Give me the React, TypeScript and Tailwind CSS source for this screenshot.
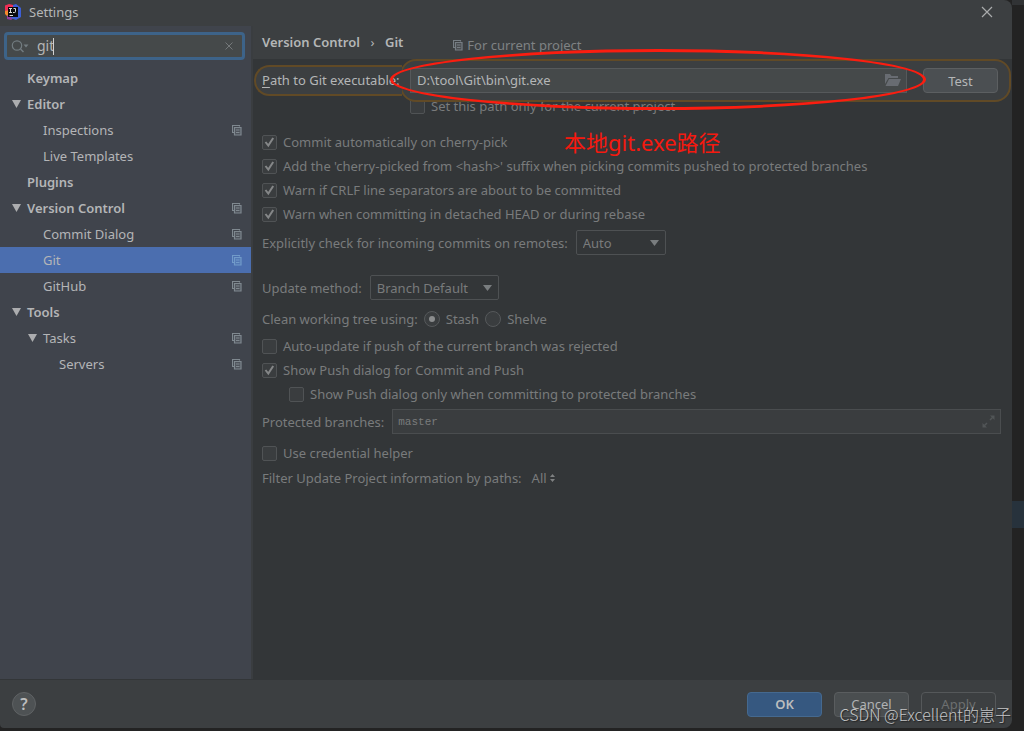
import React from 'react';

type TreeItem = {
  label: string;
  level: 0 | 1 | 2;
  expanded?: boolean;
  perProject?: boolean;
  selected?: boolean;
};

const TREE: TreeItem[] = [
  { label: 'Keymap', level: 0 },
  { label: 'Editor', level: 0, expanded: true },
  { label: 'Inspections', level: 1, perProject: true },
  { label: 'Live Templates', level: 1 },
  { label: 'Plugins', level: 0 },
  { label: 'Version Control', level: 0, expanded: true, perProject: true },
  { label: 'Commit Dialog', level: 1, perProject: true },
  { label: 'Git', level: 1, perProject: true, selected: true },
  { label: 'GitHub', level: 1, perProject: true },
  { label: 'Tools', level: 0, expanded: true },
  { label: 'Tasks', level: 1, expanded: true, perProject: true },
  { label: 'Servers', level: 2, perProject: true },
];

const INDENT = { 0: 'pl-3 font-semibold', 1: 'pl-7', 2: 'pl-11' };

export default function App() {
  return (
    <div className="flex min-h-screen bg-[#232323] font-['Noto_Sans','Noto_Sans_CJK_SC',sans-serif] text-[13px] leading-5">
      <div className="relative mb-[3px] flex min-w-0 flex-1 flex-col overflow-hidden rounded-r-lg rounded-bl-sm bg-[#3c3f41]">
        <TitleBar />
        <div className="flex flex-1">
          <Sidebar />
          <GitSettings />
        </div>
        <Footer />
        <p className="pointer-events-none absolute right-px bottom-[2px] text-base leading-6 font-light whitespace-nowrap text-[#c4c5c6] [font-family:'Noto_Sans_CJK_SC',sans-serif] [text-shadow:1px_1px_1px_#222]">
          CSDN @Excellent的崽子
        </p>
      </div>
      <EditorEdge />
    </div>
  );
}

function TitleBar() {
  return (
    <header className="flex h-[26px] items-center pr-[19px] pb-[3px] pl-[5px] text-[#b4b6b7]">
      <AppLogo />
      <h1 className="ml-2 flex-1">Settings</h1>
      <button type="button" aria-label="Close">
        <svg className="h-3 w-3" viewBox="0 0 12 12" stroke="#a9abac" strokeWidth="1.2" aria-hidden="true">
          <path d="M1 1l10 10M11 1L1 11" />
        </svg>
      </button>
    </header>
  );
}

function Sidebar() {
  return (
    <aside className="w-[251px] shrink-0 bg-[#40444c] pt-[6px] text-[#b4b5b7]">
      <div className="mr-[6px] ml-1 flex h-7 items-center rounded border-[3px] border-[#3d6389] bg-[#45494a] pr-[9px] pl-1">
        <svg className="h-4 w-[18px] shrink-0" viewBox="0 0 18 16" fill="none" aria-hidden="true">
          <circle cx="6" cy="7.5" r="4.7" stroke="#727c80" strokeWidth="1.2" />
          <path d="M9.5 11l3 3" stroke="#727c80" strokeWidth="1.5" />
          <path d="M12.5 6.5h5L15 9.5z" fill="#727c80" />
        </svg>
        <input
          type="text"
          aria-label="Search settings"
          defaultValue="git"
          className="ml-2 w-[16px] bg-transparent text-sm leading-5 text-[#b4b5b6] outline-none"
        />
        <span className="h-[17px] w-px bg-[#d0d0d0]" />
        <button type="button" aria-label="Clear search" className="ml-auto">
          <svg className="h-2 w-2" viewBox="0 0 8 8" stroke="#75797b" aria-hidden="true">
            <path d="M0.5 0.5l7 7M7.5 0.5l-7 7" />
          </svg>
        </button>
      </div>
      <ul className="mt-[5px]">
        {TREE.map(item => (
          <li
            key={item.label}
            className={`flex h-[26px] items-center pr-[9px] ${INDENT[item.level]} ${item.selected ? 'bg-[#4b6eaf]' : ''}`}
          >
            <span className="w-[15px] shrink-0">
              {item.expanded ? (
                <svg className="h-2 w-[9px]" viewBox="0 0 9 8" fill="#acadaf" aria-hidden="true">
                  <path d="M0 0h9L4.5 8z" />
                </svg>
              ) : null}
            </span>
            <span className="flex-1">{item.label}</span>
            {item.perProject ? <ProjectIcon color={item.selected ? '#719ac9' : '#7f888f'} /> : null}
          </li>
        ))}
      </ul>
    </aside>
  );
}

function GitSettings() {
  return (
    <main className="min-w-0 flex-1 border-l-2 border-[#3a3d40] bg-[#333638] text-[#797b7c]">
      <div className="flex h-[33px] items-center bg-[#3c3f41] pb-px pl-[9px]">
        <nav className="flex items-center font-semibold text-[#b4b6b7]" aria-label="Breadcrumb">
          <a href="#version-control">Version Control</a>
          <span className="w-[25px] text-center font-normal">›</span>
          <span>Git</span>
        </nav>
        <p className="mt-[6px] ml-[50px] flex items-center gap-1 text-[#7f8284]">
          <ProjectIcon color="#767d83" />
          For current project
        </p>
      </div>

      <div className="relative flex items-center pl-px">
        <label
          htmlFor="git-path"
          className="z-10 flex h-[31px] w-[148px] shrink-0 items-center rounded-l-full border-2 border-r-0 border-[#614a26] bg-[#3c3f41] pb-[2px] pl-[6px] whitespace-nowrap text-[#b4b6b7]"
        >
          <span className="underline underline-offset-2">P</span>ath to Git executable:
        </label>
        <div className="relative mr-px -ml-[2px] flex h-[43px] flex-1 items-center gap-4 rounded-2xl border-2 border-[#614a26] bg-[#3c3f41] pr-[11px] pl-2">
          <div className="flex h-[25px] flex-1 items-center border border-[#56595b] bg-[#45494a] pr-[5px] pb-[2px] pl-[6px]">
            <input
              id="git-path"
              type="text"
              defaultValue="D:\tool\Git\bin\git.exe"
              className="min-w-0 flex-1 bg-transparent text-[#b4b6b7] outline-none"
            />
            <button type="button" aria-label="Browse">
              <svg className="h-3 w-4" viewBox="0 0 16 12" fill="#686c72" aria-hidden="true">
                <path d="M0 10V0h5l1.5 2H13v2H3.5z" />
                <path d="M4 5h12l-3 7H0.5z" />
              </svg>
            </button>
          </div>
          <button
            type="button"
            className="h-[25px] w-[75px] rounded border border-[#5c5f61] bg-[#4b4f52] text-[#b4b6b7]"
          >
            Test
          </button>
        </div>
        <div className="pointer-events-none absolute -top-[10px] right-[86px] -bottom-[8px] left-[137px] z-20 rounded-[50%] border-[3px] border-[#fb1d10]" />
        <p className="pointer-events-none absolute top-[67px] left-[311px] text-[22px] leading-8 whitespace-nowrap text-[#f5190f]">
          本地git.exe路径
        </p>
      </div>

      <div className="pr-[11px] pl-[9px]">
        <div className="-mt-1 h-4 pl-[148px]">
          <Check label="Set this path only for the current project" />
        </div>

        <div className="mt-4">
          <Check label="Commit automatically on cherry-pick" checked />
          <Check
            label="Add the 'cherry-picked from <hash>' suffix when picking commits pushed to protected branches"
            checked
          />
          <Check label="Warn if CRLF line separators are about to be committed" checked />
          <Check label="Warn when committing in detached HEAD or during rebase" checked />
        </div>

        <div className="mt-1 flex items-center gap-2">
          <label htmlFor="incoming">Explicitly check for incoming commits on remotes:</label>
          <Dropdown id="incoming" width="w-[90px]" options={['Auto', 'Always', 'Never']} />
        </div>

        <div className="mt-5 flex items-center gap-2">
          <label htmlFor="update-method">Update method:</label>
          <Dropdown id="update-method" width="w-[129px]" options={['Branch Default', 'Merge', 'Rebase']} />
        </div>

        <div role="radiogroup" aria-label="Clean working tree using" className="mt-[7px] flex h-6 items-center gap-[6px]">
          <span>Clean working tree using:</span>
          <Radio label="Stash" checked />
          <Radio label="Shelve" />
        </div>

        <div className="mt-[3px]">
          <Check label="Auto-update if push of the current branch was rejected" />
          <Check label="Show Push dialog for Commit and Push" checked />
          <div className="pl-[27px]">
            <Check label="Show Push dialog only when committing to protected branches" />
          </div>
        </div>

        <div className="mt-[3px] flex items-center gap-2">
          <label htmlFor="protected">Protected branches:</label>
          <div className="flex h-[25px] flex-1 items-center border border-[#4a4d4f] bg-[#3a3d3f] px-[5px]">
            <input
              id="protected"
              type="text"
              defaultValue="master"
              className="min-w-0 flex-1 bg-transparent font-['Liberation_Mono',monospace] text-[11px] outline-none"
            />
            <svg className="h-[13px] w-[13px]" viewBox="0 0 13 13" fill="#515557" stroke="#515557" aria-hidden="true">
              <path d="M8 5l3-3M5 8l-3 3" strokeWidth="1.5" />
              <path d="M8 0.5h4.5V5zM0.5 8v4.5H5z" strokeWidth="0" />
            </svg>
          </div>
        </div>

        <div className="mt-[7px]">
          <Check label="Use credential helper" />
        </div>

        <div className="mt-px flex h-6 items-center gap-[10px]">
          <span>Filter Update Project information by paths:</span>
          <button type="button" className="flex items-center gap-[3px]">
            All
            <svg className="h-2 w-[5px]" viewBox="0 0 5 8" fill="#7f8182" aria-hidden="true">
              <path d="M0 3h5L2.5 0zM0 5h5L2.5 8z" />
            </svg>
          </button>
        </div>
      </div>
    </main>
  );
}

function Footer() {
  return (
    <footer className="flex h-[49px] items-center gap-3 border-t border-[#333638] pr-4 pl-3">
      <button
        type="button"
        aria-label="Help"
        className="mr-auto h-6 w-6 rounded-full border border-[#5f6264] bg-[#4e5254] text-base leading-5 font-semibold text-[#bcbdbe]"
      >
        ?
      </button>
      <button
        type="button"
        className="h-[25px] w-[75px] rounded border border-[#45698f] bg-[#365880] font-semibold text-[#bcbdbe]"
      >
        OK
      </button>
      <button type="button" className="h-[25px] w-[75px] rounded border border-[#5a5d5f] bg-[#4a4e50] text-[#b0b2b3]">
        Cancel
      </button>
      <button type="button" className="h-[25px] w-[75px] rounded border border-[#55585a] text-[#6d6f70]">
        Apply
      </button>
    </footer>
  );
}

/* Sliver of the IDE window that shows beside the dialog */
function EditorEdge() {
  return (
    <div className="flex w-3 shrink-0 flex-col" aria-hidden="true">
      <div className="h-[5px] bg-[#313335]" />
      <div className="mt-[496px] h-[27px] bg-[#27323c]" />
    </div>
  );
}

function Check({ label, checked }: { label: string; checked?: boolean }) {
  return (
    <label className="flex h-6 items-center gap-[6px] whitespace-nowrap in-[.h-4]:h-4">
      <span className="grid">
        <input
          type="checkbox"
          defaultChecked={checked}
          className="peer col-start-1 row-start-1 h-[15px] w-[15px] appearance-none rounded-xs border border-[#505355] bg-[#3a3d3f]"
        />
        <svg
          className="pointer-events-none invisible col-start-1 row-start-1 h-[15px] w-[15px] peer-checked:visible"
          viewBox="0 0 15 15"
          fill="none"
          stroke="#858788"
          strokeWidth="2"
          aria-hidden="true"
        >
          <path d="M3.5 7l2.8 3.5L11.2 3" />
        </svg>
      </span>
      {label}
    </label>
  );
}

function Radio({ label, checked }: { label: string; checked?: boolean }) {
  return (
    <label className="flex items-center gap-[6px]">
      <span className="grid place-items-center">
        <input
          type="radio"
          name="clean-tree"
          defaultChecked={checked}
          className="peer col-start-1 row-start-1 h-4 w-4 appearance-none rounded-full border border-[#56595b] bg-[#3a3d3f]"
        />
        <span className="pointer-events-none invisible col-start-1 row-start-1 h-[6px] w-[6px] rounded-full bg-[#8b8d8e] peer-checked:visible" />
      </span>
      {label}
    </label>
  );
}

function Dropdown({ id, width, options }: { id: string; width: string; options: string[] }) {
  return (
    <div className={`grid items-center ${width}`}>
      <select
        id={id}
        className="col-start-1 row-start-1 h-[25px] appearance-none rounded-xs border border-[#4e5153] bg-[#333638] pl-[6px]"
      >
        {options.map(option => (
          <option key={option}>{option}</option>
        ))}
      </select>
      <svg
        className="pointer-events-none col-start-1 row-start-1 mr-[7px] h-[6px] w-[9px] justify-self-end"
        viewBox="0 0 9 6"
        fill="#797d7f"
        aria-hidden="true"
      >
        <path d="M0 0h9L4.5 6z" />
      </svg>
    </div>
  );
}

function ProjectIcon({ color }: { color: string }) {
  return (
    <svg className="h-[11px] w-[10px] shrink-0" viewBox="0 0 10 11" fill="none" stroke={color} aria-hidden="true">
      <path d="M7.5 1.5V0.5H0.5V7.5H2" strokeWidth="1.2" />
      <path d="M2.5 2.5h6.500v7.500h-6.500z" fill={color} fillOpacity="0.25" strokeWidth="1.2" />
      <path d="M4 5h3.500M4 7.500h3.500" />
    </svg>
  );
}

function AppLogo() {
  return (
    <svg className="h-4 w-4 shrink-0" viewBox="0 0 16 16" aria-hidden="true">
      <path d="M0 1.500L4 0l4 1 1 4-6 5-3-3z" fill="#ee2f55" />
      <path d="M0 7l4-1 1 5-3 1-2-2z" fill="#f28a2c" />
      <path d="M2 12l4-3 4 4-4 3-4-1z" fill="#8f3d9f" />
      <path d="M8 1l3-1 5 4v9l-5 3-5-2 2-5z" fill="#3d5fd6" />
      <path d="M3 3h10v10H3z" fill="#0b0b0f" />
      <path d="M4 4.500h3M5.500 4.500v4M4 8.500h3M8.500 4.500h2V7.500q0 1-1 1H8M4.500 11.500h3.500" fill="none" stroke="#dcdcdc" />
    </svg>
  );
}
